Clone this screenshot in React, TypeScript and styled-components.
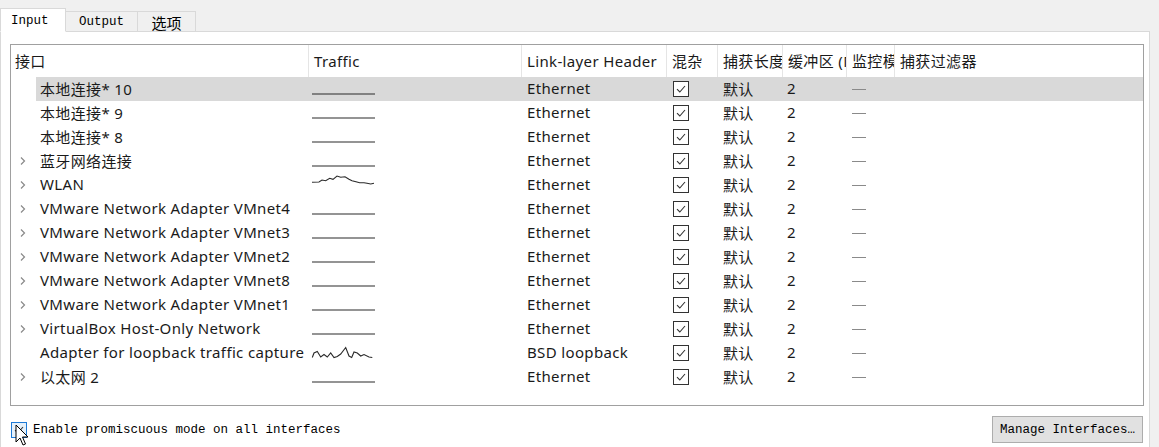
import React from 'react';
import styled, {createGlobalStyle} from 'styled-components';

const GlobalStyle = createGlobalStyle`
  html, body {
    margin: 0;
    padding: 0;
    background: #f0f0f0;
  }
  body {
    width: 1159px;
    height: 447px;
    overflow: hidden;
  }
`;

const UI_FONT = `"Noto Sans", "Noto Sans CJK SC", sans-serif`;
const MONO_FONT = `"Liberation Mono", "Noto Sans CJK SC", monospace`;

const Window = styled.div`
  width: 1159px;
  height: 447px;
  display: flex;
  flex-direction: column;
  position: relative;
`;

const TabBar = styled.div`
  height: 31px;
  display: flex;
  align-items: flex-end;
  box-sizing: border-box;
`;

const Tab = styled.div<{active?: boolean; w: number; cjk?: boolean}>`
  box-sizing: border-box;
  height: ${p => (p.active ? '24px' : '21px')};
  padding: 0 10px;
  display: flex;
  align-items: center;
  justify-content: ${p => (p.active ? 'flex-start' : 'center')};
  font-family: ${p => (p.cjk ? UI_FONT : MONO_FONT)};
  font-size: ${p => (p.cjk ? '15px' : '12.5px')};
  color: #000;
  background: ${p => (p.active ? '#ffffff' : '#f0f0f0')};
  border: 1px solid #d9d9d9;
  border-bottom: ${p => (p.active ? '1px solid #ffffff' : '1px solid #d9d9d9')};
  margin-bottom: -1px;
  position: relative;
  z-index: ${p => (p.active ? 1 : 0)};
  width: ${p => p.w}px;
  margin-left: ${p => (p.active ? '0' : '-1px')};
  padding-top: 1px;
`;

const Pane = styled.div`
  flex: 1;
  width: 1150px;
  box-sizing: border-box;
  background: #ffffff;
  border: 1px solid #d9d9d9;
  border-bottom: none;
  padding: 12px 0 0 9px;
  display: flex;
  flex-direction: column;
`;

const TableBox = styled.div`
  width: 1134px;
  height: 362px;
  box-sizing: border-box;
  border: 1px solid #a0a0a0;
  background: #fff;
  overflow: hidden;
  font-family: ${UI_FONT};
  font-size: 15px;
  letter-spacing: 0.35px;
  color: #1a1a1a;
`;

const COLS = '298px 213px 145px 51px 65px 64px 48px 1fr';

const HeaderRow = styled.div`
  display: grid;
  grid-template-columns: ${COLS};
  height: 32px;
`;

const HeaderCell = styled.div<{pad?: number}>`
  box-sizing: border-box;
  padding-left: ${p => p.pad ?? 5}px;
  padding-bottom: 1px;
  display: flex;
  align-items: center;
  white-space: nowrap;
  overflow: hidden;
  border-right: 1px solid #e5e5e5;
  &:last-child {
    border-right: none;
  }
`;

const Row = styled.div<{selected?: boolean}>`
  display: grid;
  grid-template-columns: ${COLS};
  height: 24px;
  align-items: center;
  background: ${p =>
    p.selected ? 'linear-gradient(to right, transparent 25px, #d9d9d9 25px)' : 'transparent'};
`;

const Cell = styled.div<{pad?: number}>`
  box-sizing: border-box;
  padding-left: ${p => p.pad ?? 5}px;
  padding-bottom: 2px;
  white-space: nowrap;
  overflow: hidden;
  display: flex;
  align-items: center;
  height: 24px;
`;

const NameCell = styled(Cell)`
  padding-left: 8px;
`;

const Arrow = styled.span<{show: boolean}>`
  width: 21px;
  flex: none;
  display: flex;
  align-items: center;
  padding-top: 2px;
  visibility: ${p => (p.show ? 'visible' : 'hidden')};
`;

const Check = styled.span`
  width: 16px;
  height: 16px;
  box-sizing: border-box;
  border: 1px solid #333;
  background: #fff;
  display: flex;
  align-items: center;
  justify-content: center;
  margin-top: 2px;
`;

const Dash = styled.span`
  width: 14px;
  height: 1px;
  background: #8a8a8a;
  margin-top: 3px;
`;

const Footer = styled.div`
  display: flex;
  align-items: center;
  justify-content: space-between;
  padding: 9px 6px 0 1px;
`;

const PromiscLabel = styled.label`
  display: flex;
  align-items: center;
  gap: 6px;
  font-family: ${MONO_FONT};
  font-size: 12.5px;
  color: #000;
  margin-top: 1px;
`;

const BigCheck = styled.span`
  width: 16px;
  height: 16px;
  box-sizing: border-box;
  border: 1px solid #1e7ad6;
  background: #e5f1fb;
  display: flex;
  align-items: center;
  justify-content: center;
`;

const Button = styled.button`
  width: 151px;
  height: 27px;
  box-sizing: border-box;
  background: #e1e1e1;
  border: 1px solid #adadad;
  font-family: ${MONO_FONT};
  font-size: 12.5px;
  color: #000;
  padding: 0;
  margin-top: 1px;
`;

const Cursor = styled.svg`
  position: absolute;
  left: 15px;
  top: 424px;
`;

const CheckMark = ({size = 12}: {size?: number}) => (
  <svg width={size} height={size} viewBox="0 0 12 12">
    <path d="M2 6.2 L4.8 9 L10 3" fill="none" stroke="#333" strokeWidth="1.1" />
  </svg>
);

const Chevron = () => (
  <svg width="8" height="10" viewBox="0 0 8 10">
    <path d="M2 1.5 L5.5 5 L2 8.5" fill="none" stroke="#8a8a8a" strokeWidth="1.2" />
  </svg>
);

const WAVES: Record<string, string> = {
  flat: '1,18 64,18',
  wlan: '1,10.3 8,10 11,8 14.7,8.7 18.7,6.3 22,7.3 26,4 29.7,5.3 34,4.7 38,7.3 41,8.7 45,9.7 48.7,10.7 53,10.7 56,11.3 59.7,12 63,11.3',
  loop: '1.3,17.5 3,13 6.3,11.5 9.7,17 13,14.5 16.3,17 19.7,13 23,17.5 26.3,16.5 29.7,14 34.7,7.5 38,16 40.7,17.5 43,12 46.3,13 49.7,16 53,14.5 58,17 61.3,17.5',
};

const Spark = ({kind}: {kind: string}) => (
  <svg width="66" height="24" viewBox="0 0 66 24">
    <polyline points={WAVES[kind]} fill="none" stroke="#2a2a2a" strokeWidth="1.1" />
  </svg>
);

type Iface = {name: string; children: boolean; traffic: string; link: string};

const rows: Iface[] = [
  {name: '本地连接* 10', children: false, traffic: 'flat', link: 'Ethernet'},
  {name: '本地连接* 9', children: false, traffic: 'flat', link: 'Ethernet'},
  {name: '本地连接* 8', children: false, traffic: 'flat', link: 'Ethernet'},
  {name: '蓝牙网络连接', children: true, traffic: 'flat', link: 'Ethernet'},
  {name: 'WLAN', children: true, traffic: 'wlan', link: 'Ethernet'},
  {name: 'VMware Network Adapter VMnet4', children: true, traffic: 'flat', link: 'Ethernet'},
  {name: 'VMware Network Adapter VMnet3', children: true, traffic: 'flat', link: 'Ethernet'},
  {name: 'VMware Network Adapter VMnet2', children: true, traffic: 'flat', link: 'Ethernet'},
  {name: 'VMware Network Adapter VMnet8', children: true, traffic: 'flat', link: 'Ethernet'},
  {name: 'VMware Network Adapter VMnet1', children: true, traffic: 'flat', link: 'Ethernet'},
  {name: 'VirtualBox Host-Only Network', children: true, traffic: 'flat', link: 'Ethernet'},
  {name: 'Adapter for loopback traffic capture', children: false, traffic: 'loop', link: 'BSD loopback'},
  {name: '以太网 2', children: true, traffic: 'flat', link: 'Ethernet'},
];

const headers = ['接口', 'Traffic', 'Link-layer Header', '混杂', '捕获长度', '缓冲区 (MB)', '监控模式', '捕获过滤器'];

export default function App() {
  return (
    <Window>
      <GlobalStyle />
      <TabBar>
        <Tab active w={66}>Input</Tab>
        <Tab w={73}>Output</Tab>
        <Tab w={59} cjk>选项</Tab>
      </TabBar>
      <Pane>
        <TableBox>
          <HeaderRow>
            {headers.map((h, i) => (
              <HeaderCell key={h} pad={i === 0 ? 4 : 5}>{h}</HeaderCell>
            ))}
          </HeaderRow>
          {rows.map((r, i) => (
            <Row key={r.name} selected={i === 0}>
              <NameCell>
                <Arrow show={r.children}><Chevron /></Arrow>
                {r.name}
              </NameCell>
              <Cell pad={2}><Spark kind={r.traffic} /></Cell>
              <Cell pad={5}>{r.link}</Cell>
              <Cell pad={6}><Check><CheckMark /></Check></Cell>
              <Cell pad={5}>默认</Cell>
              <Cell pad={4}>2</Cell>
              <Cell pad={5}><Dash /></Cell>
              <Cell />
            </Row>
          ))}
        </TableBox>
        <Footer>
          <PromiscLabel>
            <BigCheck><CheckMark /></BigCheck>
            Enable promiscuous mode on all interfaces
          </PromiscLabel>
          <Button>Manage Interfaces…</Button>
        </Footer>
      </Pane>
      <Cursor width="14" height="23" viewBox="0 0 14 23">
        <path d="M1 1 L1 18 L5 14 L8 21 L10.5 20 L7.5 13 L13 13 Z" fill="#fff" stroke="#000" strokeWidth="1" />
      </Cursor>
    </Window>
  );
}
